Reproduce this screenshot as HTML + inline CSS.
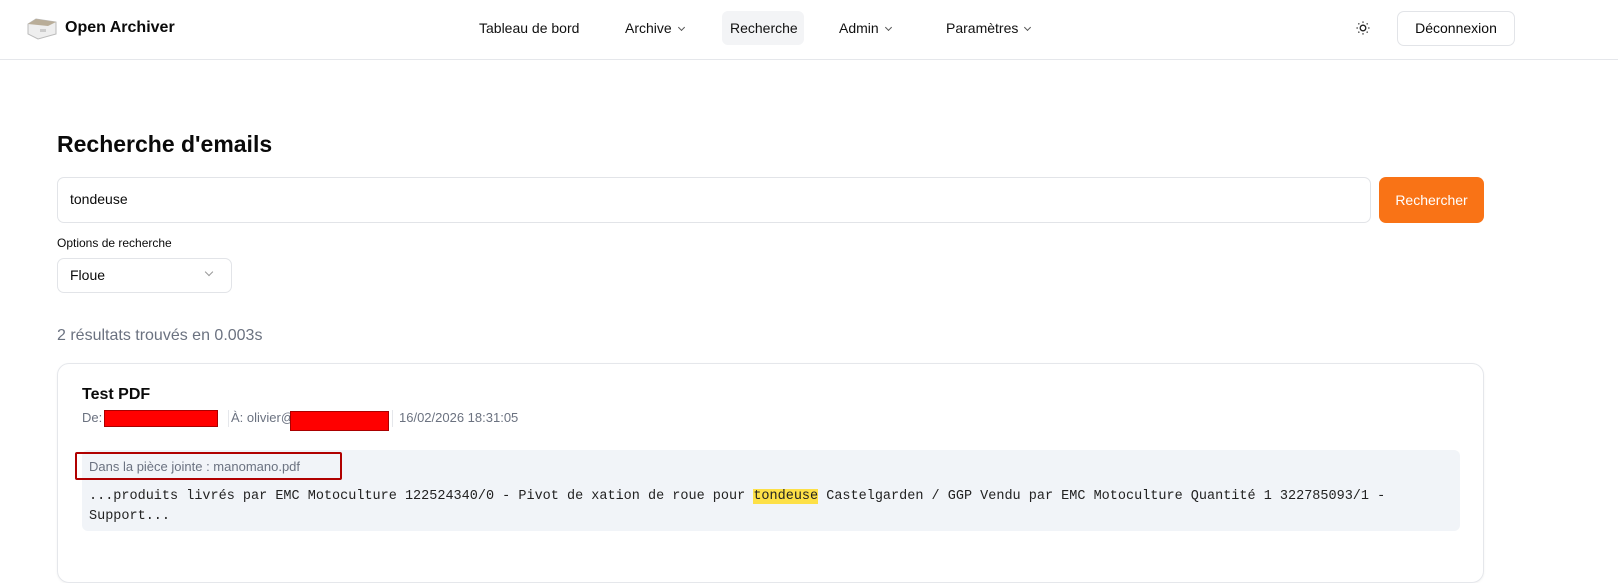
<!DOCTYPE html>
<html><head><meta charset="utf-8"><style>
*{box-sizing:border-box;margin:0;padding:0}
body{width:1618px;height:556px;overflow:hidden;background:#fff;font-family:"Liberation Sans","DejaVu Sans",sans-serif;color:#0a0a0a;position:relative}
.a{position:absolute}
.nav{font-size:14px;color:#111}
.chev{display:inline-block;width:5px;height:5px;border-right:1px solid #555;border-bottom:1px solid #555;transform:rotate(45deg);margin-left:7px;position:relative;top:-3px}
</style></head><body>
<div class="a" style="left:0;top:59px;width:1618px;height:1px;background:#e5e7eb"></div>
<svg class="a" style="left:26px;top:18px" width="32" height="22" viewBox="0 0 32 22"><path d="M2 6 L10 1 L30 4 L30 16 L12 21 L2 16Z" fill="#eee" stroke="#bbb"/><path d="M2 6 L10 1 L30 4 L22 8Z" fill="#b9ad98"/><rect x="14" y="11" width="6" height="3" fill="#ccc"/></svg>
<div class="a" style="left:65px;top:19px;font-size:16px;font-weight:bold">Open Archiver</div>
<div class="a nav" style="left:479px;top:20px">Tableau de bord</div>
<div class="a nav" style="left:625px;top:20px">Archive<span class="chev"></span></div>
<div class="a" style="left:722px;top:11px;width:82px;height:34px;background:#f3f4f6;border-radius:6px"></div>
<div class="a nav" style="left:730px;top:20px">Recherche</div>
<div class="a nav" style="left:839px;top:20px">Admin<span class="chev"></span></div>
<div class="a nav" style="left:946px;top:20px">Paramètres<span class="chev"></span></div>
<svg class="a" style="left:1355px;top:20px" width="16" height="16" viewBox="0 0 16 16" fill="none" stroke="#222" stroke-width="1.3"><circle cx="8" cy="8" r="2.8"/><path d="M8 1.5v1.3M8 13.2v1.3M1.5 8h1.3M13.2 8h1.3M3.4 3.4l.9.9M11.7 11.7l.9.9M3.4 12.6l.9-.9M11.7 4.3l.9-.9"/></svg>
<div class="a" style="left:1397px;top:11px;width:118px;height:35px;border:1px solid #e2e4e8;border-radius:7px;font-size:14px;text-align:center;line-height:33px">Déconnexion</div>
<div class="a" style="left:57px;top:131px;font-size:23px;font-weight:bold">Recherche d'emails</div>
<div class="a" style="left:57px;top:177px;width:1314px;height:46px;border:1px solid #e2e4e8;border-radius:7px;font-size:14px;padding:13px 12px">tondeuse</div>
<div class="a" style="left:1379px;top:177px;width:105px;height:46px;background:#f97316;border-radius:7px;color:#fff;font-size:14px;text-align:center;line-height:46px">Rechercher</div>
<div class="a" style="left:57px;top:236px;font-size:12px">Options de recherche</div>
<div class="a" style="left:57px;top:258px;width:175px;height:35px;border:1px solid #e2e4e8;border-radius:7px;font-size:14px;padding:8px 12px">Floue</div>
<span class="a" style="left:206px;top:269px;width:6px;height:6px;border-right:1px solid #999;border-bottom:1px solid #999;transform:rotate(45deg)"></span>
<div class="a" style="left:57px;top:327px;font-size:16px;color:#6b7280">2 résultats trouvés en 0.003s</div>
<div class="a" style="left:57px;top:363px;width:1427px;height:220px;border:1px solid #e5e7eb;border-radius:12px;box-shadow:0 1px 2px rgba(0,0,0,.05)"></div>
<div class="a" style="left:82px;top:386px;font-size:16px;font-weight:bold">Test PDF</div>
<div class="a" style="left:82px;top:410px;font-size:13px;color:#6b7280">De:</div>
<div class="a" style="left:104px;top:410px;width:114px;height:17px;background:#f00;border:1px solid #a00"></div>
<div class="a" style="left:228px;top:410px;width:1px;height:17px;background:#e5e7eb"></div>
<div class="a" style="left:231px;top:410px;font-size:13px;color:#6b7280">À: olivier@</div>
<div class="a" style="left:290px;top:411px;width:99px;height:20px;background:#f00;border:1px solid #a00"></div>
<div class="a" style="left:392px;top:410px;width:1px;height:17px;background:#e5e7eb"></div>
<div class="a" style="left:399px;top:410px;font-size:13px;color:#6b7280">16/02/2026 18:31:05</div>
<div class="a" style="left:82px;top:450px;width:1378px;height:81px;background:#f1f4f8;border-radius:6px"></div>
<div class="a" style="left:75px;top:452px;width:267px;height:28px;border:2px solid #b00000;border-radius:2px"></div>
<div class="a" style="left:89px;top:459px;font-size:13px;color:#6b7280">Dans la pièce jointe : manomano.pdf</div>
<div class="a" style="left:89px;top:487px;font-family:'Liberation Mono',monospace;font-size:13.5px;line-height:20px;color:#222;width:1360px">...produits livrés par EMC Motoculture 122524340/0 - Pivot de xation de roue pour <span style="background:#fde047">tondeuse</span> Castelgarden / GGP Vendu par EMC Motoculture Quantité 1 322785093/1 -<br>Support...</div>
</body></html>
